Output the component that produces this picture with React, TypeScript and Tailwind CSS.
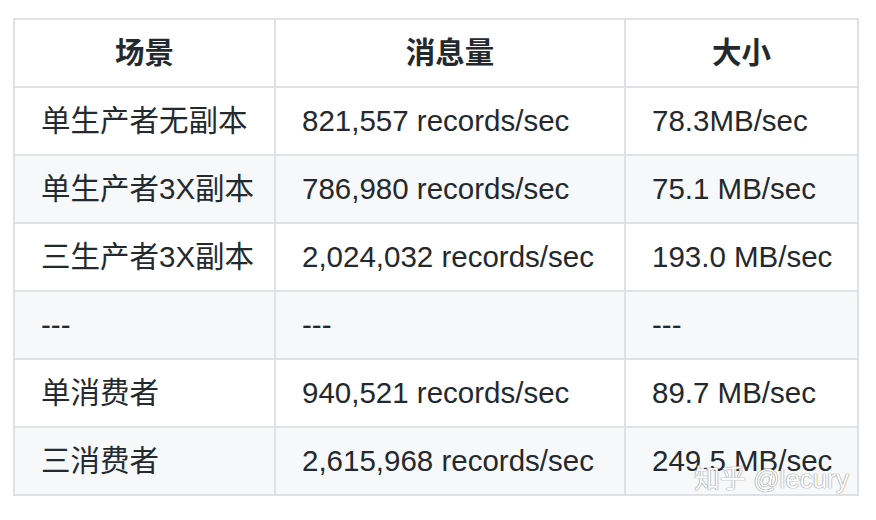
const HEAD = ["场景", "消息量", "大小"];

const ROWS = [
  ["单生产者无副本", "821,557 records/sec", "78.3MB/sec"],
  ["单生产者3X副本", "786,980 records/sec", "75.1 MB/sec"],
  ["三生产者3X副本", "2,024,032 records/sec", "193.0 MB/sec"],
  ["---", "---", "---"],
  ["单消费者", "940,521 records/sec", "89.7 MB/sec"],
  ["三消费者", "2,615,968 records/sec", "249.5 MB/sec"],
];

export default function App() {
  return (
    <div
      className="relative w-[876px] h-[520px] bg-white pt-[18px] pl-[13px] text-[#24292e]"
      style={{ fontFamily: '"Liberation Sans", "Noto Sans CJK SC", sans-serif' }}
    >
      <table className="border-collapse text-[29.5px] leading-none">
        <thead>
          <tr className="h-[68px] bg-white">
            {HEAD.map((h, i) => (
              <th
                key={h}
                className={`border-2 border-[#dfe2e5] font-bold text-center ${
                  i === 0 ? "w-[261px]" : i === 1 ? "w-[350px]" : "w-[233px]"
                }`}
              >
                {h}
              </th>
            ))}
          </tr>
        </thead>
        <tbody>
          {ROWS.map((r, i) => (
            <tr
              key={i}
              className={`h-[68px] ${i % 2 === 1 ? "bg-[#f6f8fa]" : "bg-white"}`}
            >
              {r.map((c, j) => (
                <td
                  key={j}
                  className="border-2 border-[#dfe2e5] pl-[26px] pr-2 whitespace-nowrap"
                >
                  {c}
                </td>
              ))}
            </tr>
          ))}
        </tbody>
      </table>

      {/* zhihu watermark */}
      <div
        className="absolute left-[694px] top-[466px] text-[26px] leading-none text-white whitespace-nowrap"
        style={{ textShadow: "0 0 1px #7a7a7a, 0 0 1px #7a7a7a" }}
      >
        知乎 @lecury
      </div>
    </div>
  );
}
